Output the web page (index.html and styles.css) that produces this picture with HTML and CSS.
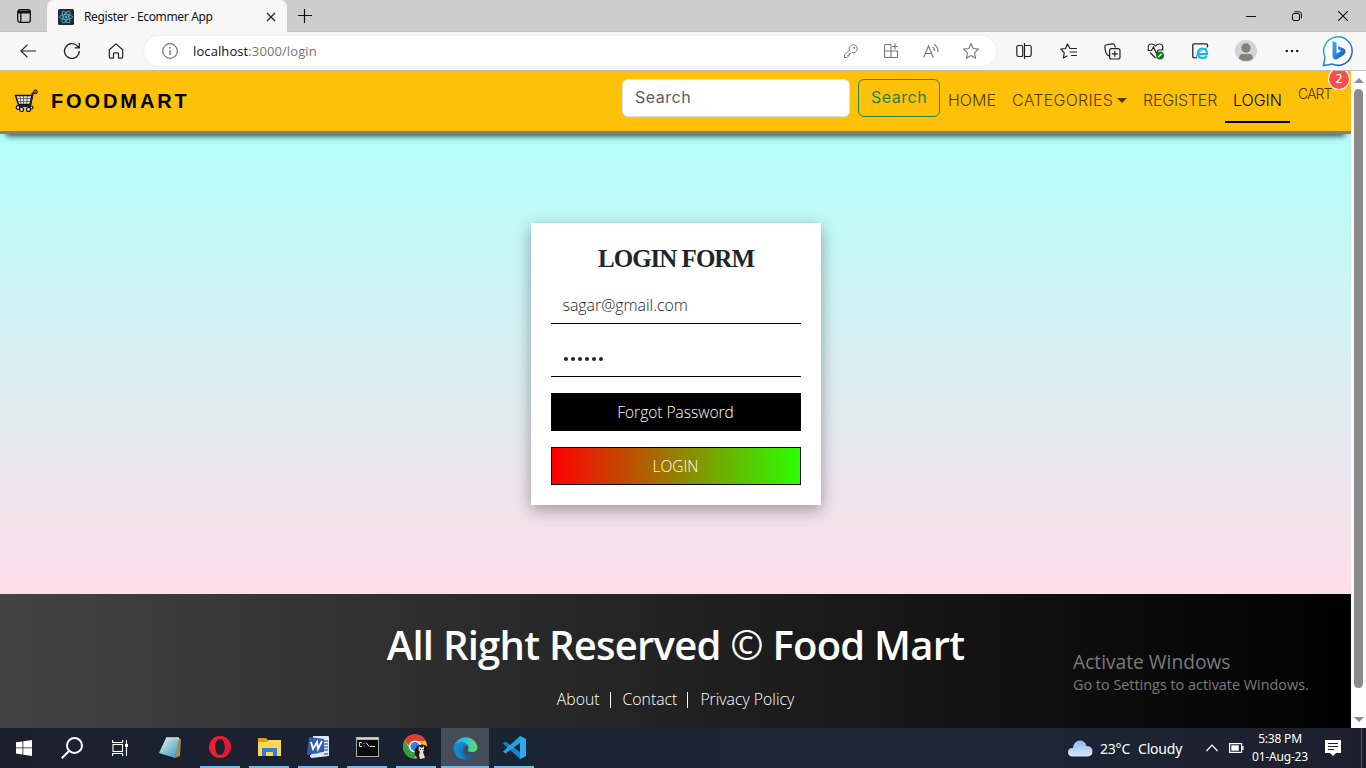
FILE: index.html
```html
<!DOCTYPE html>
<html lang="en">
<head>
<meta charset="utf-8">
<title>Register - Ecommer App</title>
<link rel="stylesheet" href="styles.css">
</head>
<body>
<div class="screen">
  <header class="titlebar">
    <div class="tab-actions"><svg width="16" height="16" viewBox="0 0 16 16" fill="none" stroke="#111" stroke-width="1.3"><rect x="1.7" y="1.7" width="12.6" height="12.6" rx="2.2"/><path d="M2 3.5h12M2 4.6h12" stroke-width="1.8"/><path d="M4.8 5v9"/></svg></div>
    <div class="tab">
      <svg width="16" height="16" viewBox="0 0 16 16"><rect width="16" height="16" rx="1.5" fill="#222a30"/><g fill="none" stroke="#4fb3cf" stroke-width=".9"><ellipse cx="8" cy="8" rx="6.5" ry="2.5"/><ellipse cx="8" cy="8" rx="6.5" ry="2.5" transform="rotate(60 8 8)"/><ellipse cx="8" cy="8" rx="6.5" ry="2.5" transform="rotate(120 8 8)"/></g><circle cx="8" cy="8" r="1.3" fill="#4fb3cf"/></svg>
      <span class="tab-title">Register - Ecommer App</span>
      <svg class="tab-close" width="10" height="10" viewBox="0 0 10 10" stroke="#222" stroke-width="1.2"><path d="M1 1l8 8M9 1l-8 8"/></svg>
    </div>
    <svg class="new-tab" width="14" height="14" viewBox="0 0 14 14" stroke="#111" stroke-width="1.2"><path d="M6.500 0v14M0 6.500h14"/></svg>
    <div class="window-buttons">
      <svg width="10" height="10" viewBox="0 0 10 10" stroke="#111"><path d="M0 5.5h10"/></svg>
      <svg width="10" height="10" viewBox="0 0 10 10" fill="none" stroke="#111"><rect x=".5" y="2.5" width="7" height="7" rx="1.5"/><path d="M2.5 .7h4.5a2.4 2.4 0 0 1 2.4 2.4V7.5"/></svg>
      <svg width="10" height="10" viewBox="0 0 10 10" stroke="#111" stroke-width="1.1"><path d="M0 0l10 10M10 0L0 10"/></svg>
    </div>
  </header>

  <div class="toolbar">
    <div class="tool"><svg width="16" height="14" viewBox="0 0 16 14" fill="none" stroke="#222" stroke-width="1.2"><path d="M16 7H1M7.5 .6L1 7l6.500 6.400"/></svg></div>
    <div class="tool"><svg width="18" height="18" viewBox="0 0 18 18" fill="none" stroke="#222" stroke-width="1.3"><path d="M16.300 9A7.400 7.400 0 1 1 14.500 4.200L16 5.500M16.300 1v4.800h-4.800"/></svg></div>
    <div class="tool"><svg width="16" height="16" viewBox="0 0 16 16" fill="none" stroke="#222" stroke-width="1.200"><path d="M1.300 6.800L8 .9l6.700 5.900v7q0 1.300-1.200 1.300h-3v-4.300q0-1-1-1h-3q-1 0-1 1v4.300h-3q-1.200 0-1.200-1.300z" stroke-linejoin="round"/></svg></div>
    <div class="address">
      <svg width="16" height="16" viewBox="0 0 16 16" fill="none" stroke="#777"><circle cx="8" cy="8" r="7.300" stroke-width="1.200"/><path d="M8 7v5M8 4v1.500" stroke-width="1.400"/></svg>
      <span class="url">localhost<span class="url-path">:3000/login</span></span>
      <div class="address-icons">
        <div><svg class="key" width="14" height="14" viewBox="0 0 14 14" fill="none" stroke="#777"><path d="M5.500 6A4 4 0 1 1 8 8.500L7 9.500H5.500V11H4v1.500L3 13.500H.5V11z" stroke-linejoin="round"/><circle cx="10.200" cy="3.800" r=".7"/></svg></div>
        <div><svg width="16" height="16" viewBox="0 0 16 16" fill="none" stroke="#777" stroke-width="1.100"><path d="M8 1.500H2.500q-1 0-1 1v11q0 1 1 1h11q1 0 1-1V8h-13M8 1.500v13M12 .5v6M9 3.500h6"/></svg></div>
        <div><svg width="16" height="14" viewBox="0 0 16 14" fill="none" stroke="#777" stroke-width="1.100"><path d="M.7 13.500L5.500 2l4.800 11.500M2.500 9.500h6M9.500 3q2 1.300 2 4M11 .5q4.500 2.500 4 7.500"/></svg></div>
        <div><svg width="18" height="18" viewBox="0 0 18 18" fill="none" stroke="#777" stroke-width="1.100" stroke-linejoin="round"><path d="M9 1.500l2.200 5 5.300.6-4 3.700 1.100 5.400L9 13.500l-4.600 2.700 1.100-5.400-4-3.700 5.300-.6z"/></svg></div>
      </div>
    </div>
    <div class="tool"><svg width="16" height="16" viewBox="0 0 16 16" fill="none" stroke="#222" stroke-width="1.200"><path d="M5.500 2.500h-3Q.8 2.500.8 4.200v7.600q0 1.700 1.700 1.700h3q1.200 0 1.200-1.500V4q0-1.500-1.200-1.500zM9 2.500h4.500q1.700 0 1.700 1.700v7.600q0 1.700-1.700 1.700H9M8.500 0v16"/></svg></div>
    <div class="tool"><svg width="17" height="16" viewBox="0 0 17 16" fill="none" stroke="#222" stroke-width="1.200" stroke-linejoin="round"><path d="M10 5.500L7.500 1 5.500 5.500.8 6.200l3.500 3.600-1 5.200 4.200-2.300M9.500 5.500H17M9.500 9H17M11 12.500h6"/></svg></div>
    <div class="tool"><svg width="17" height="17" viewBox="0 0 17 17" fill="none" stroke="#222" stroke-width="1.200"><path d="M5 13L3.500 12Q1.500 10 1.300 7L.8 4Q.7 2.500 2 2L8 .8q1.500-.2 2.500 1.200l1 2.500"/><rect x="5.600" y="5.600" width="10.400" height="10.400" rx="2"/><path d="M10.800 7.800v6M7.800 10.800h6"/></svg></div>
    <div class="tool"><svg width="18" height="17" viewBox="0 0 18 17" fill="none" stroke="#222" stroke-width="1.200"><path d="M1.500 7Q0 1 4.500 1 7 1 8.500 3 10 1 12.500 1q4.500 0 3 6M.5 7.500h4L6.500 4l3 6.500L11 7h5.500M3 9.500L8.500 15"/><circle cx="13" cy="12.500" r="4" fill="#107c10" stroke="none"/><path d="M11 14.300l3.800-3.600" stroke="#fff"/></svg></div>
    <div class="tool"><svg width="17" height="17" viewBox="0 0 17 17" fill="none"><path d="M15.500 4V2q0-1.200-1.200-1.200H2Q.8.800.8 2v11.500q0 1.200 1.200 1.200h3" stroke="#222" stroke-width="1.300"/><path d="M5.500 11H15Q15 5.500 10.500 5.500T6 10.500q0 4.500 4.700 4.500 2.800 0 3.800-2.200" stroke="#1eb4ec" stroke-width="2.200"/><path d="M3.500 15.500Q5 8 15.500 4.500" stroke="#1eb4ec"/></svg></div>
    <div class="tool tool-avatar"><svg width="22" height="22" viewBox="0 0 22 22"><circle cx="11" cy="11" r="11" fill="#d6d3d0"/><circle cx="11" cy="8" r="4.700" fill="#85807c"/><path d="M4 18.500Q4 14 7.500 14h7q3.500 0 3.500 4.500A11 11 0 0 1 4 18.500" fill="#85807c"/></svg></div>
    <div class="tool"><svg width="14" height="4" viewBox="0 0 14 4" fill="#222"><circle cx="1.800" cy="2" r="1.300"/><circle cx="7" cy="2" r="1.300"/><circle cx="12.200" cy="2" r="1.300"/></svg></div>
    <div class="tool tool-bing"><svg width="32" height="32" viewBox="0 0 32 32"><defs><linearGradient id="bing" x2="1" y2="1"><stop stop-color="#35b8ef"/><stop offset="1" stop-color="#1a4fd0"/></linearGradient></defs><path d="M1.500 30.500L3 22A14.200 14.200 0 1 1 10 29z" fill="#fff" stroke="url(#bing)" stroke-width="1.500"/><path d="M10.500 6l4 1.500v11L19 16l-2.500-1.500L15.500 11l6 2.300q2.500 1 2 4-.4 2-2.500 3.300L14.500 24.500q-4 0-4-4z" fill="url(#bing)"/></svg></div>
  </div>

  <div class="viewport">
    <div class="page">
      <nav class="navbar">
        <svg class="cart-icon" width="24" height="24" viewBox="0 0 24 24"><path d="M1.500 6.500h17l-2 9h-12z" fill="#e4e4e4" stroke="#111" stroke-width="1.500"/><path d="M3 9.500h15M4 12.500h14M6 7l1 8M9.500 7v8M13.500 7l-1 8" stroke="#555" stroke-width=".8" fill="none"/><path d="M21.500 3.500l-3 1-2.500 12.500H4.500" stroke="#222" stroke-width="2" fill="none"/><circle cx="21.500" cy="2.800" r="1.900" fill="#e5483d" stroke="#111"/><g fill="#e4e4e4" stroke="#111" stroke-width="1.200"><circle cx="4" cy="18.500" r="1.800"/><circle cx="7.500" cy="20.500" r="2"/><circle cx="14.500" cy="20.500" r="2"/><circle cx="17.500" cy="18.500" r="1.500"/></g></svg>
        <span class="brand">FOODMART</span>
        <div class="search-box">Search</div>
        <div class="search-button">Search</div>
        <div class="nav-link home">HOME</div>
        <div class="nav-link categories"><span>CATEGORIES</span><i class="caret"></i></div>
        <div class="nav-link register">REGISTER</div>
        <div class="nav-link login">LOGIN</div>
        <div class="cart-link">CART<span class="badge">2</span></div>
      </nav>
      <main class="content">
        <form class="login-card">
          <h1 class="card-title">LOGIN FORM</h1>
          <div class="field email">sagar@gmail.com</div>
          <div class="field password"><i></i><i></i><i></i><i></i><i></i><i></i></div>
          <div class="button forgot">Forgot Password</div>
          <div class="button submit">LOGIN</div>
        </form>
      </main>
      <footer class="footer">
        <h2 class="footer-title">All Right Reserved <span class="copyright">©</span> Food Mart</h2>
        <div class="footer-links"><span>About</span><i></i><span>Contact</span><i></i><span>Privacy Policy</span></div>
        <div class="activate"><div class="activate-title">Activate Windows</div><div class="activate-text">Go to Settings to activate Windows.</div></div>
      </footer>
    </div>
    <div class="scrollbar"><i class="arrow-up"></i><div class="thumb"></div><i class="arrow-down"></i></div>
  </div>

  <div class="taskbar">
    <div class="app"><svg width="16" height="16" viewBox="0 0 16 16" fill="#fff"><path d="M0 2.300l6.500-.9v6.100H0zM7.300 1.300L16 0v7.500H7.300zM0 8.300h6.500v6.200L0 13.600zM7.300 8.300H16V16l-8.700-1.300z"/></svg></div>
    <div class="app"><svg width="22" height="22" viewBox="0 0 22 22" fill="none" stroke="#fff" stroke-width="2"><circle cx="13.500" cy="8.500" r="7.500"/><path d="M8 14L.8 21.200"/></svg></div>
    <div class="app"><svg width="16" height="16" viewBox="0 0 16 16" fill="none" stroke="#fff" stroke-width="1.100"><path d="M.6 0v2.500h10V0M.6 16v-2.500h10V16M14.500 0v16"/><rect x="1" y="4.500" width="9.500" height="7"/><path d="M13 5.500h3" stroke-width="3"/></svg></div>
    <div class="app notes"><svg width="24" height="22" viewBox="0 0 24 22"><defs><linearGradient id="note" x2="1" y2="1"><stop stop-color="#ddf5fa"/><stop offset="1" stop-color="#3895ae"/></linearGradient></defs><path d="M19 1l4 1-1 17-5 2z" fill="#a58c53"/><path d="M8 1h13l-4 20L1 16z" fill="url(#note)"/><path d="M8 1h13" stroke="#ddd" stroke-width="1.500"/></svg></div>
    <div class="app opera running"><svg width="24" height="24" viewBox="0 0 24 24"><path fill-rule="evenodd" d="M12 1a11 11 0 1 0 0 22 11 11 0 1 0 0-22M12 4c3 0 4.800 3.500 4.800 8S15 20 12 20s-4.800-3.500-4.800-8S9 4 12 4" fill="#f21c30"/><path d="M13 4q7-1 9 5 2 8-4 11-3 1-5 0 4-2 4-8t-4-8" fill="#b7152b" opacity=".3"/></svg></div>
    <div class="app folder running"><svg width="23" height="20" viewBox="0 0 23 20"><path d="M0 1h8l2 2h12v16H0z" fill="#e3a013"/><path d="M0 5h9l2-2h12v16H0z" fill="#ffd65c"/><path d="M4 19v-8h15v8h-4v-4H8v4z" fill="#2e83cf"/></svg></div>
    <div class="app word running"><svg width="24" height="24" viewBox="0 0 24 24"><path d="M7 1h15q1 0 1 1v19l-18 2z" fill="#dce8fa"/><path d="M17 6h5M17 9h5M17 12h5M17 15h5M9 19h13" stroke="#5376b5" stroke-width="1.300"/><path d="M3 2L18 4v13L1 20z" fill="#315eaf"/><path d="M4 20l14-3v4L4 22z" fill="#dce8fa"/><path d="M5 7l2 7 4-7 1 7 4-8" fill="none" stroke="#fff" stroke-width="1.800"/></svg></div>
    <div class="app cmd running"><svg width="23" height="20" viewBox="0 0 23 20"><rect x=".5" y=".5" width="22" height="19" fill="#0a0a0a" stroke="#aaa"/><path d="M1 1.800h21" stroke="#d8d8d8" stroke-width="2"/><path d="M6 5.500H3.500v4H6M8 6v1M8 8.500v1M10 5.500l3 4M14 9.500h5" fill="none" stroke="#ddd"/></svg></div>
    <div class="app chrome running"><svg width="28" height="26" viewBox="0 0 28 26"><circle cx="13" cy="12.500" r="12" fill="#fbc116"/><path d="M2.600 6.500A12 12 0 0 1 24 7H13v11z" fill="#e43e2f"/><path d="M2.600 6.500A12 12 0 0 0 12 24.500l5-8-9-1z" fill="#2ca14b"/><circle cx="13" cy="12.500" r="6" fill="#fff"/><circle cx="13" cy="12.500" r="4.600" fill="#397de4"/><circle cx="20" cy="18" r="7.500" fill="#211915"/><path d="M17 12l1.500 1.500h2L22 12v4l-1 2 2 6-5 1-1-4 1-3-1.500-2z" fill="#ddd"/><path d="M18 15.500h1M20.500 15.500h1" stroke="#222"/></svg></div>
    <div class="app edge running"><svg width="25" height="25" viewBox="0 0 25 25"><defs><linearGradient id="edge-top"><stop stop-color="#28a8e5"/><stop offset=".55" stop-color="#30c9cf"/><stop offset="1" stop-color="#67dd58"/></linearGradient><linearGradient id="edge-bottom" x2="1" y2="1"><stop stop-color="#1796df"/><stop offset="1" stop-color="#0757a4"/></linearGradient></defs><path d="M1 11.500A12 12 0 0 1 24.500 12q0 5-5.500 5-5 0-4-2.500 1.500-3-1-5Q7 5 1 11.500" fill="url(#edge-top)"/><path d="M.5 13Q1 7 8 7q6 0 7 4-5-1-5 4 1 6 7 6 3 0 5.500-2Q19 24.500 12 24.500 1 23 .5 13" fill="url(#edge-bottom)"/><path d="M8 7Q3 12 7 19q3 4 7 5.300Q7 25 3 20-1 13 8 7" fill="#1689d4"/></svg></div>
    <div class="app vscode running"><svg width="25" height="25" viewBox="0 0 25 25"><path d="M18 1l6 3v17l-6 3L1 8.500l2.500-2L18 17z" fill="#1b82d0"/><path d="M18 1v7L3.500 18.500 1 16.500z" fill="#239fe3"/><path d="M18 1l6 3v17l-6 3z" fill="#2baaf0"/></svg></div>
    <div class="tray">
      <svg class="cloud" width="25" height="17" viewBox="0 0 25 17"><defs><linearGradient id="cloud" y2="1" x2="0"><stop stop-color="#8bb5f5"/><stop offset="1" stop-color="#dbe8fc"/></linearGradient></defs><path d="M5 16.500q-5 0-5-4.500 0-4 5-4Q6 .5 12 .5q5 0 6.500 5.500 6 0 6 5.500 0 5-6 5z" fill="url(#cloud)"/></svg>
      <span class="temperature">23°C</span><span class="cloudy">Cloudy</span>
      <svg class="chevron" width="12" height="8" viewBox="0 0 12 8" fill="none" stroke="#fff" stroke-width="1.200"><path d="M.5 7L6 1.200 11.500 7"/></svg>
      <svg class="battery" width="15" height="10" viewBox="0 0 15 10"><path d="M.6.600h12v8.800H.6zM14 3v4" fill="none" stroke="#fff" stroke-width="1.200"/><path d="M2.300 2.300h7.500v5.400H2.300z" fill="#fff"/></svg>
      <div class="clock"><span class="time">5:38 PM</span><span class="date">01-Aug-23</span></div>
      <svg class="notice" width="16" height="16" viewBox="0 0 16 16"><path d="M0 0h16v13h-5l-3 3-3-3H0z" fill="#fff"/><path d="M3 3.500h10M3 6.500h10M3 9.500h6" stroke="#1c2030" stroke-width="1.100"/></svg>
    </div>
  </div>
</div>
</body>
</html>
```
FILE: styles.css
```css
* { box-sizing: border-box; }
body { margin: 0; font-family: "Open Sans", sans-serif; overflow: hidden; }
svg { display: block; flex: none; }
.screen { width: 1366px; height: 768px; display: flex; flex-direction: column; white-space: nowrap; }

.titlebar { height: 32px; flex: none; background: #cdcdcd; display: flex; align-items: center; border-bottom: 1px solid #c2c2c2; }
.tab-actions { width: 47px; padding-left: 16px; }
.tab { width: 240px; height: 33px; align-self: flex-start; background: #f7f7f7; border-radius: 7px 7px 0 0; display: flex; align-items: center; padding: 0 11px; }
.tab-title { margin-left: 10px; font-family: "Noto Sans", sans-serif; font-size: 12px; letter-spacing: -.34px; color: #111; }
.tab-close { margin-left: auto; }
.new-tab { margin-left: 11px; }
.window-buttons { margin-left: auto; display: flex; gap: 36px; padding-right: 18px; }

.toolbar { height: 39px; flex: none; background: #f7f7f7; border-bottom: 1px solid #bdbdbd; display: flex; align-items: center; padding-left: 6px; }
.tool { width: 44px; flex: none; display: flex; justify-content: center; }
.tool-avatar { width: 48px; }
.tool-bing { width: 48px; }
.address { width: 852px; height: 30px; margin: 0 6px; background: #fff; border-radius: 15px; display: flex; align-items: center; padding: 0 5px 0 18px; box-shadow: 0 0 3px #e8e8e8; }
.url { margin-left: 15px; font-size: 13px; letter-spacing: .1px; color: #111; }
.url-path { color: #757575; }
.address-icons { margin-left: auto; display: flex; }
.address-icons div { width: 40px; display: flex; align-items: center; justify-content: center; }

.viewport { height: 657px; flex: none; display: flex; }
.page { width: 1351px; display: flex; flex-direction: column; }
.navbar { height: 63px; flex: none; background: #ffc107; border-bottom: 3px solid #808080; box-shadow: 0 8px 6px -6px rgba(0,0,0,.75); display: flex; align-items: flex-start; padding: 8px 0 0 14px; position: relative; }
.cart-icon { margin-top: 10px; }
.brand { width: 571px; margin-left: 13px; padding-top: 9px; font: bold 20px/26px "Liberation Sans", sans-serif; letter-spacing: 2.9px; color: #000; }
.search-box, .search-button { height: 38px; border-radius: 6px; font: 16px/34px Inter, sans-serif; letter-spacing: .5px; padding-left: 12px; }
.search-box { width: 228px; background: #fff; border: 1px solid #dee2e6; color: #595c5f; }
.search-button { width: 82px; margin-left: 8px; border: 1px solid #198754; color: #198754; }
.nav-link { height: 44px; padding: 0 8px; font: 300 16px/42px Inter, sans-serif; color: #4d3a02; }
.home { width: 64px; }
.categories { width: 131px; display: flex; align-items: center; letter-spacing: .25px; height: 42px; }
.caret { border: 5px solid transparent; border-top-color: #4d3a02; border-bottom: 0; margin-left: 4px; }
.register { width: 90px; letter-spacing: -.2px; }
.login { width: 65px; color: #000; border-bottom: 2px solid #000; }
.cart-link { position: relative; padding-left: 8px; font: 300 14px/30px Inter, sans-serif; letter-spacing: -.9px; color: #4d3a02; width: 60px; }
.badge { position: absolute; left: 39px; top: -10px; width: 20px; height: 20px; border-radius: 10px; background: #ff4d4f; box-shadow: 0 0 0 1px #fff; color: #fff; font: 12px/20px "Noto Sans", sans-serif; letter-spacing: 0; text-align: center; clip-path: inset(2px -2px -2px -2px); }
.content { height: 460px; flex: none; background: linear-gradient(#b3fffa, #ffdde8); display: flex; justify-content: center; align-items: flex-start; padding-top: 89px; }
.login-card { width: 290px; height: 282px; background: #fff; padding: 20px; box-shadow: 0 5px 15px rgba(0,0,0,.35); }
.card-title { margin: 0; height: 31px; font: bold 25px/31px "Liberation Serif", serif; letter-spacing: -1px; padding-left: 1px; text-align: center; color: #212529; }
.field { border-bottom: 1px solid #000; padding-left: 12px; }
.email { margin-top: 12px; height: 38px; font: 300 15.9px/38px "Open Sans", sans-serif; color: #212529; }
.password { height: 37px; margin-top: 16px; padding: 2px 0 0 13px; display: flex; gap: 3px; align-items: center; }
.password i { width: 4px; height: 4px; border-radius: 2px; background: #212529; }
.button { height: 38px; margin-top: 16px; border: 1px solid #000; color: #fff; text-align: center; font: 300 15.5px/37px "Open Sans", sans-serif; }
.forgot { background: #000; }
.submit { background: linear-gradient(90deg, #f00, #2bff00); }
.footer { height: 134px; flex: none; background: linear-gradient(90deg, #434343, #000); color: #fff; position: relative; padding-top: 27px; }
.footer-title { margin: 0; font: 600 40px/48px "Open Sans", sans-serif; letter-spacing: -.75px; text-align: center; }
.copyright { font-weight: 400; }
.footer-links { margin-top: 19px; height: 22px; display: flex; justify-content: center; align-items: center; font: 300 15.8px/22px "Open Sans", sans-serif; }
.footer-links i { width: 1px; height: 16px; background: #fff; margin: 2px 12px 0 10px; }
.activate { position: absolute; left: 1073px; top: 55px; color: #7b7b7b; font-family: "Open Sans", sans-serif; }
.activate-title { font-size: 19.2px; line-height: 26px; }
.activate-text { font-size: 14.4px; line-height: 20px; }
.scrollbar { width: 15px; background: #fcfcfc; display: flex; flex-direction: column; align-items: center; padding: 7px 0 6px; }
.arrow-up { border: 5px solid transparent; border-top: 0; border-bottom-color: #8b8b8b; }
.thumb { width: 9px; height: 599px; margin-top: 6px; border-radius: 5px; background: #8b8b8b; }
.arrow-down { margin-top: auto; border: 5px solid transparent; border-bottom: 0; border-top-color: #8b8b8b; }

.taskbar { height: 40px; flex: none; background: linear-gradient(90deg, #1c1f2e, #1a2433 45%, #1b2533 75%, #1e1f2e); display: flex; }
.app { width: 48px; height: 40px; display: flex; align-items: center; justify-content: center; }
.notes { width: 52px; }
.running { width: 40px; margin-right: 9px; border-bottom: 2px solid #76b9ed; }
.opera { margin-left: 4px; }
.chrome { margin-right: 5px; }
.edge { width: 48px; margin-right: 5px; background: #474c59; }
.tray { margin-left: auto; width: 294px; display: flex; align-items: center; color: #fff; font-family: "Noto Sans", sans-serif; font-size: 14px; border-right: 1px solid #565a66; margin-right: 4px; }
.temperature { margin-left: 7px; width: 38px; letter-spacing: -.2px; }
.cloudy { width: 68px; letter-spacing: -.2px; }
.battery { margin-left: 11px; }
.clock { width: 72px; display: flex; flex-direction: column; text-align: center; font-size: 12px; line-height: 18px; letter-spacing: -.2px; }
.notice { margin-left: 9px; }
```
